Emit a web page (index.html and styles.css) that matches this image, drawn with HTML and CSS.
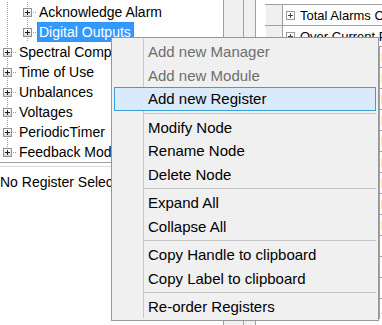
FILE: index.html
```html
<!DOCTYPE html>
<html lang="en">

<head>
    <meta charset="UTF-8">
    <meta name="viewport" content="width=device-width, initial-scale=1.0">
    <title>Register Tree</title>
    <link rel="stylesheet" href="styles.css">
</head>

<body>

    <div id="app">
        <div id="tree-pane">
            <ul id="tree">
                <li class="node lvl2"><span class="expander"></span><span class="hline"></span><span class="label">Acknowledge Alarm</span></li>
                <li class="node lvl2"><span class="expander"></span><span class="hline"></span><span class="label selected">Digital Outputs</span></li>
                <li class="node lvl1"><span class="expander"></span><span class="hline"></span><span class="label">Spectral Components</span></li>
                <li class="node lvl1"><span class="expander"></span><span class="hline"></span><span class="label">Time of Use</span></li>
                <li class="node lvl1"><span class="expander"></span><span class="hline"></span><span class="label">Unbalances</span></li>
                <li class="node lvl1"><span class="expander"></span><span class="hline"></span><span class="label">Voltages</span></li>
                <li class="node lvl1"><span class="expander"></span><span class="hline"></span><span class="label">PeriodicTimer</span></li>
                <li class="node lvl1 last"><span class="expander"></span><span class="hline"></span><span class="label">Feedback Modules</span></li>
            </ul>
            <div id="status">No Register Selected</div>
        </div>
        <div id="tree-scroll"></div>
        <div id="splitter"></div>
        <div id="grid-pane">
            <div class="grid-row group">
                <div class="row-head"></div>
                <div class="cell"><span class="grid-expander"></span>Total Alarms Count</div>
            </div>
            <div class="grid-row group">
                <div class="row-head"></div>
                <div class="cell"><span class="grid-expander"></span>Over Current Phase A</div>
            </div>
        </div>

        <div id="context-menu">
            <div class="menu-item disabled">Add new Manager</div>
            <div class="menu-item disabled">Add new Module</div>
            <div class="menu-item active">Add new Register</div>
            <div class="menu-sep"></div>
            <div class="menu-item">Modify Node</div>
            <div class="menu-item">Rename Node</div>
            <div class="menu-item">Delete Node</div>
            <div class="menu-sep"></div>
            <div class="menu-item">Expand All</div>
            <div class="menu-item">Collapse All</div>
            <div class="menu-sep"></div>
            <div class="menu-item">Copy Handle to clipboard</div>
            <div class="menu-item">Copy Label to clipboard</div>
            <div class="menu-sep"></div>
            <div class="menu-item">Re-order Registers</div>
        </div>
    </div>

    <script>
        // rows behind the menu, only their value column peeks out
        const values = ['False', 'False', 'False', 'False', 'False', 'False', 'False', 'False', 'False',
            ':', ':', ':', '1'];
        const gridPane = document.getElementById('grid-pane');

        values.forEach((value) => {
            const row = document.createElement('div');
            row.classList.add('grid-row');
            row.innerHTML = `
                <div class="row-head"></div>
                <div class="cell name"></div>
                <div class="cell value${value === '1' ? ' number' : ''}">${value}</div>
            `;
            gridPane.appendChild(row);
        });
    </script>

</body>

</html>
```

FILE: styles.css
```css
html,
body {
    margin: 0;
    padding: 0;
    height: 100%;
    overflow: hidden;
    background-color: #fff;
}

#app {
    display: flex;
    height: 325px;
    width: 382px;
    position: relative;
    overflow: hidden;
    font-family: 'Liberation Sans', Arial, sans-serif;
    color: #000;
}

/* left side: tree + status label */
#tree-pane {
    flex: 0 0 223px;
    border-right: 1px solid #a0a0a0;
    background-color: #fff;
    font-size: 14px;
}

#tree {
    list-style: none;
    margin: 0;
    padding: 2px 0 0 0;
    height: 160px;
    border-bottom: 1px solid #a0a0a0;
}

.node {
    display: flex;
    align-items: center;
    height: 20px;
    white-space: nowrap;
    background-repeat: no-repeat;
    background-image: repeating-linear-gradient(to bottom, #a0a0a0 0 1px, transparent 1px 2px);
    background-size: 1px 100%;
    background-position: 7px 0;
}

.node.lvl1 {
    padding-left: 3px;
}

.node.lvl2 {
    padding-left: 23px;
    background-image: repeating-linear-gradient(to bottom, #a0a0a0 0 1px, transparent 1px 2px),
        repeating-linear-gradient(to bottom, #a0a0a0 0 1px, transparent 1px 2px);
    background-size: 1px 100%, 1px 100%;
    background-position: 7px 0, 27px 0;
}

.node.last {
    background-size: 1px 50%;
}

.expander {
    flex: 0 0 9px;
    height: 9px;
    box-sizing: border-box;
    border: 1px solid #919191;
    background:
        linear-gradient(#1c1c1c, #1c1c1c) center / 5px 1px no-repeat,
        linear-gradient(#1c1c1c, #1c1c1c) center / 1px 5px no-repeat,
        linear-gradient(#fff, #dadada);
}

.hline {
    flex: 0 0 5px;
    height: 1px;
    background: repeating-linear-gradient(to right, transparent 0 1px, #a0a0a0 1px 2px);
}

.label {
    line-height: 18px;
    padding: 0 2px 0 1px;
    border: 1px dotted transparent;
}

.label.selected {
    background-color: #3399ff;
    color: #fff;
    border-color: #cc6600;
}

#status {
    margin-top: 3px;
    border-top: 1px solid #dcdcdc;
    padding-top: 5px;
    line-height: 20px;
    white-space: nowrap;
}

/* middle strips */
#tree-scroll {
    flex: 0 0 19px;
    background-color: #f0f0f0;
    border-right: 1px solid #a0a0a0;
}

#splitter {
    flex: 0 0 11px;
    background-color: #f0f0f0;
    border-right: 1px solid #a0a0a0;
}

/* right side: property grid */
#grid-pane {
    flex: 1;
    padding: 4px 0 0 9px;
    background-color: #fff;
    font-size: 13px;
    overflow: hidden;
}

.grid-row {
    display: flex;
    height: 20px;
    border-top: 1px solid #a0a0a0;
    white-space: nowrap;
}

.row-head {
    flex: 0 0 16px;
    background-color: #f0f0f0;
    border-right: 1px solid #a0a0a0;
    border-left: 1px solid #fff;
}

.cell {
    display: flex;
    align-items: center;
    padding-left: 3px;
}

.grid-row.group .cell {
    flex: 1;
}

.cell.name {
    flex: 0 0 93px;
    border-right: 1px solid #a0a0a0;
}

.cell.value {
    padding-left: 1px;
}

.cell.number {
    color: #600000;
}

.grid-expander {
    flex: 0 0 9px;
    height: 9px;
    box-sizing: border-box;
    margin-right: 5px;
    border: 1px solid #9a9a9a;
    background:
        linear-gradient(#444, #444) center / 5px 1px no-repeat,
        linear-gradient(#444, #444) center / 1px 5px no-repeat,
        #fff;
}

/* popup menu */
#context-menu {
    position: absolute;
    left: 111px;
    top: 37px;
    width: 268px;
    box-sizing: border-box;
    padding: 2px 2px 1px 2px;
    background-color: #f0f0f0;
    border: 1px solid #979797;
    font-size: 15px;
    background-image: linear-gradient(#c8c8c8, #c8c8c8);
    background-repeat: no-repeat;
    background-size: 1px calc(100% - 3px);
    background-position: 31px 1px;
}

.menu-item {
    display: flex;
    align-items: center;
    height: 23.5px;
    box-sizing: border-box;
    padding-left: 33px;
    border: 1px solid transparent;
    white-space: nowrap;
}

.menu-item.disabled {
    color: #6d6d6d;
}

.menu-item.active {
    background-color: #d9eafb;
    border-color: #3a9fdc;
}

.menu-sep {
    height: 5px;
    margin-left: 29px;
    margin-right: 0;
    background: linear-gradient(#c5c5c5, #c5c5c5) 0 2px / 100% 1px no-repeat;
}
```
